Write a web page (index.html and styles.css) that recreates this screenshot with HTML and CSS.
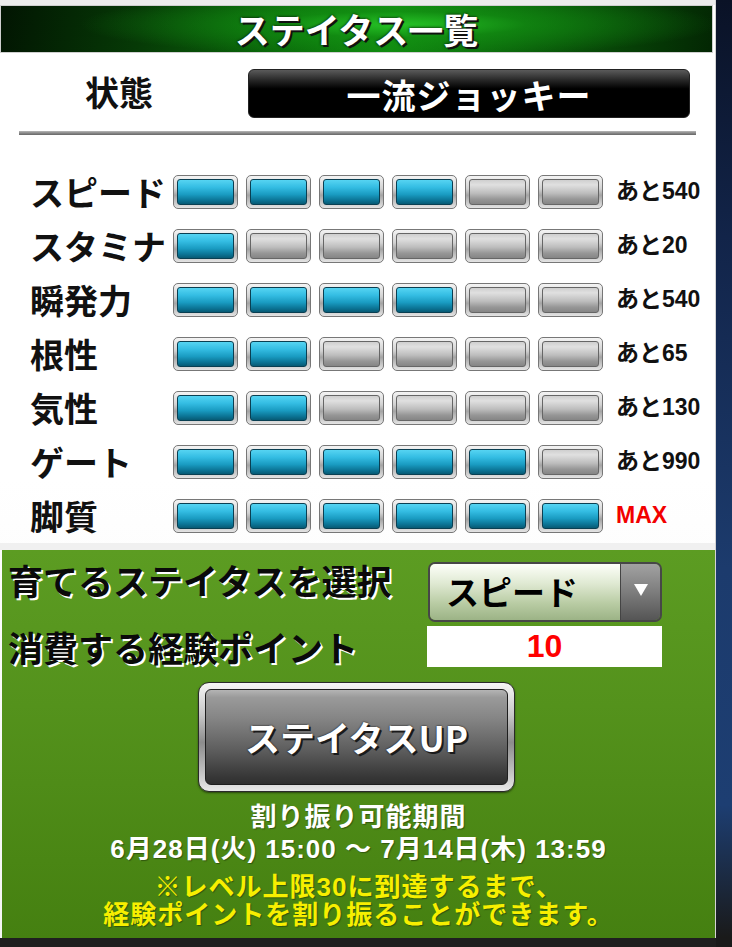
FILE: index.html
```html
<!DOCTYPE html>
<html lang="ja">
<head>
<meta charset="utf-8">
<title>ステイタス一覧</title>
<link rel="stylesheet" href="styles.css">
</head>
<body>
<div class="screen">
  <div class="panel">
    <header class="title">ステイタス一覧</header>
    <div class="state-row">
      <div class="state-label">状態</div>
      <div class="state-box">一流ジョッキー</div>
    </div>
    <div class="divider"></div>
    <div class="stats">
      <div class="stat-row">
        <div class="stat-name">スピード</div>
        <div class="bars"><span class="bar on"></span><span class="bar on"></span><span class="bar on"></span><span class="bar on"></span><span class="bar"></span><span class="bar"></span></div>
        <div class="stat-val">あと540</div>
      </div>
      <div class="stat-row">
        <div class="stat-name">スタミナ</div>
        <div class="bars"><span class="bar on"></span><span class="bar"></span><span class="bar"></span><span class="bar"></span><span class="bar"></span><span class="bar"></span></div>
        <div class="stat-val">あと20</div>
      </div>
      <div class="stat-row">
        <div class="stat-name">瞬発力</div>
        <div class="bars"><span class="bar on"></span><span class="bar on"></span><span class="bar on"></span><span class="bar on"></span><span class="bar"></span><span class="bar"></span></div>
        <div class="stat-val">あと540</div>
      </div>
      <div class="stat-row">
        <div class="stat-name">根性</div>
        <div class="bars"><span class="bar on"></span><span class="bar on"></span><span class="bar"></span><span class="bar"></span><span class="bar"></span><span class="bar"></span></div>
        <div class="stat-val">あと65</div>
      </div>
      <div class="stat-row">
        <div class="stat-name">気性</div>
        <div class="bars"><span class="bar on"></span><span class="bar on"></span><span class="bar"></span><span class="bar"></span><span class="bar"></span><span class="bar"></span></div>
        <div class="stat-val">あと130</div>
      </div>
      <div class="stat-row">
        <div class="stat-name">ゲート</div>
        <div class="bars"><span class="bar on"></span><span class="bar on"></span><span class="bar on"></span><span class="bar on"></span><span class="bar on"></span><span class="bar"></span></div>
        <div class="stat-val">あと990</div>
      </div>
      <div class="stat-row">
        <div class="stat-name">脚質</div>
        <div class="bars"><span class="bar on"></span><span class="bar on"></span><span class="bar on"></span><span class="bar on"></span><span class="bar on"></span><span class="bar on"></span></div>
        <div class="stat-val max">MAX</div>
      </div>
    </div>
    <div class="band"></div>
    <section class="train">
      <div class="train-row first">
        <div class="train-label">育てるステイタスを選択</div>
        <div class="select">
          <div class="select-value">スピード</div>
          <div class="select-arrow"><span class="tri"></span></div>
        </div>
      </div>
      <div class="train-row second">
        <div class="train-label">消費する経験ポイント</div>
        <div class="points">10</div>
      </div>
      <div class="btn-outer">
        <div class="btn-inner">ステイタスUP</div>
      </div>
      <div class="info">
        <div class="info-line">割り振り可能期間</div>
        <div class="info-line">6月28日(火) 15:00 〜 7月14日(木) 13:59</div>
        <div class="info-line note">※レベル上限30に到達するまで、</div>
        <div class="info-line note">経験ポイントを割り振ることができます。</div>
      </div>
    </section>
  </div>
  <div class="side"></div>
</div>
</body>
</html>
```

FILE: styles.css
```css
html, body {
  margin: 0;
  padding: 0;
}
body {
  width: 732px;
  height: 947px;
  overflow: hidden;
  background: #1f1f1f;
  font-family: "Noto Sans CJK JP", sans-serif;
}
.screen {
  display: flex;
  width: 732px;
  height: 947px;
}
.panel {
  width: 716px;
  height: 938px;
  box-sizing: border-box;
  padding-top: 5px;
  background: linear-gradient(180deg, #ececec 0px, #ececec 5px, #ffffff 5px, #ffffff 480px, #f4f4f4 100%);
  border-right: 1px solid #d4d4d4;
  flex: none;
}
.side {
  flex: 1;
  background: linear-gradient(180deg, #0a1226 0%, #122449 25%, #1c3b6d 60%, #1d3e72 85%, #1a1a1a 99%, #1a1a1a 100%);
}

/* header */
.title {
  width: 713px;
  height: 48px;
  box-sizing: border-box;
  border: 1px solid #cfcfcf;
  background:
    radial-gradient(ellipse 45% 70% at 56% 40%, rgba(40, 200, 40, 0.9) 0%, rgba(20, 150, 20, 0.6) 40%, rgba(0, 0, 0, 0) 100%),
    linear-gradient(100deg, #021502 0%, #063a06 20%, #0a6a0a 40%, #108a10 55%, #0a5e0a 75%, #032603 100%);
  color: #fff;
  font-size: 35px;
  font-weight: 700;
  line-height: 46px;
  text-align: center;
  text-shadow: 2px 2px 0 #111, 0 0 3px #000;
}

/* state */
.state-row {
  display: flex;
  align-items: center;
  height: 78px;
}
.state-label {
  width: 248px;
  box-sizing: border-box;
  padding-left: 85px;
  font-size: 34px;
  font-weight: 700;
  color: #111;
  line-height: 40px;
}
.state-box {
  width: 442px;
  height: 49px;
  margin-top: 3px;
  box-sizing: border-box;
  border-radius: 6px;
  border: 1px solid #222;
  background: linear-gradient(180deg, #5a5a5a 0%, #262626 22%, #000 40%, #000 100%);
  color: #fff;
  font-size: 34px;
  font-weight: 700;
  line-height: 50px;
  text-align: center;
  letter-spacing: 1px;
}
.divider {
  width: 677px;
  height: 4px;
  margin-left: 19px;
  background: linear-gradient(180deg, #b8b8b8 0%, #8a8a8a 50%, #666 100%);
}

/* stats */
.stats {
  margin-top: 30px;
}
.stat-row {
  display: flex;
  align-items: center;
  height: 54px;
  padding-left: 30px;
}
.stat-name {
  width: 143px;
  flex: none;
  white-space: nowrap;
  font-size: 34px;
  font-weight: 700;
  color: #111;
  line-height: 40px;
}
.bars {
  display: flex;
  gap: 8px;
  flex: none;
}
.bar {
  display: block;
  width: 65px;
  height: 34px;
  box-sizing: border-box;
  padding: 3px;
  border-radius: 5px;
  border: 1px solid #777;
  background: linear-gradient(180deg, #f4f4f4 0%, #d2d2d2 40%, #a4a4a4 60%, #e4e4e4 100%);
}
.bar::after {
  content: "";
  display: block;
  height: 100%;
  box-sizing: border-box;
  border-radius: 3px;
  border: 1px solid #666;
  background: linear-gradient(180deg, #cfcfcf 0%, #e0e0e0 20%, #bdbdbd 55%, #969696 80%, #858585 100%);
}
.bar.on::after {
  border-color: #0a3f52;
  background: linear-gradient(180deg, #56d4f2 0%, #34bde3 30%, #1a9cc2 60%, #0b7394 85%, #075a74 100%);
}
.stat-val {
  margin-left: 13px;
  font-family: "Liberation Sans", "Noto Sans CJK JP", sans-serif;
  font-size: 23px;
  font-weight: 700;
  color: #111;
  white-space: nowrap;
  line-height: 30px;
  margin-top: -3px;
}
.stat-val.max {
  color: #f20000;
}
.band {
  height: 7px;
  background: #f0f0f0;
}

/* training section */
.train {
  margin-left: 2px;
  width: 713px;
  height: 388px;
  box-sizing: border-box;
  padding-top: 12px;
  background: linear-gradient(180deg, #5c9c22 0%, #54921c 40%, #4a8614 80%, #458011 100%);
}
.train-row {
  display: flex;
  padding-left: 6px;
}
.train-row.first {
  align-items: flex-start;
  height: 60px;
}
.train-row.second {
  align-items: center;
  margin-top: 4px;
  height: 41px;
}
.train-label {
  width: 420px;
  flex: none;
  font-size: 35px;
  font-weight: 700;
  color: #0a0a0a;
  line-height: 36px;
  white-space: nowrap;
  text-shadow: 2px 2px 0 #fff;
}
.select {
  display: flex;
  width: 234px;
  height: 60px;
  box-sizing: border-box;
  border: 2px solid #474747;
  border-radius: 7px;
  overflow: hidden;
}
.select-value {
  flex: 1;
  background: linear-gradient(180deg, #fdfff9 0%, #dfe9d2 35%, #b9cca4 70%, #9cb386 100%);
  font-size: 33px;
  font-weight: 700;
  color: #000;
  line-height: 54px;
  padding-left: 16px;
}
.select-arrow {
  width: 40px;
  border-left: 1px solid #444;
  background: linear-gradient(180deg, #a2a2a2 0%, #7d7d7d 50%, #555 100%);
  display: flex;
  justify-content: center;
  padding-top: 20px;
  box-sizing: border-box;
}
.tri {
  width: 0;
  height: 0;
  border-left: 7px solid transparent;
  border-right: 7px solid transparent;
  border-top: 12px solid #fff;
}
.points {
  width: 235px;
  height: 41px;
  margin-left: -1px;
  background: #fff;
  color: #f00;
  font-family: "Liberation Sans", sans-serif;
  font-size: 32px;
  font-weight: 700;
  line-height: 41px;
  text-align: center;
}

/* button */
.btn-outer {
  width: 317px;
  height: 110px;
  margin: 15px 0 0 196px;
  box-sizing: border-box;
  border: 1px solid #2a2a2a;
  border-radius: 11px;
  padding: 6px;
  background: linear-gradient(180deg, #f6f6f6 0%, #c6c6c6 30%, #8c8c8c 55%, #bdbdbd 80%, #e8e8e8 100%);
  box-shadow: 0 1px 2px rgba(0,0,0,0.5);
}
.btn-inner {
  height: 100%;
  box-sizing: border-box;
  border: 1px solid #1e1e1e;
  border-radius: 6px;
  background: linear-gradient(180deg, #b4b4b4 0%, #9a9a9a 8%, #858585 30%, #5c5c5c 65%, #3a3a3a 90%, #2e2e2e 100%);
  color: #fff;
  font-size: 35px;
  font-weight: 700;
  line-height: 94px;
  text-align: center;
  text-shadow: 2px 2px 0 #1a1a1a, 0 0 2px #000;
}

/* info */
.info {
  margin-top: 9px;
  text-align: center;
  font-family: "Liberation Sans", "Noto Sans CJK JP", sans-serif;
  font-weight: 700;
  font-size: 26px;
  letter-spacing: 1px;
  color: #fff;
  text-shadow: 1px 1px 1px rgba(0,0,0,0.35);
}
.info-line {
  line-height: 32px;
  white-space: nowrap;
}
.info-line.note {
  color: #f7ef00;
  line-height: 28px;
}
.info-line:nth-child(3) {
  margin-top: 8px;
}
```
